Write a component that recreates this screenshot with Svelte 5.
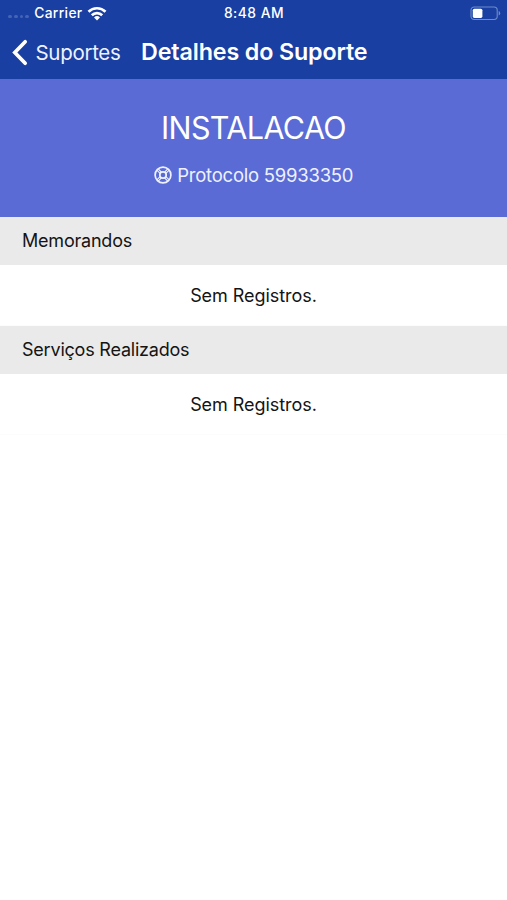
<script lang="ts">
  const title = "Detalhes do Suporte";
  const support = { type: "INSTALACAO", protocol: "59933350" };

  const sections: { name: string; items: string[] }[] = [
    { name: "Memorandos", items: [] },
    { name: "Serviços Realizados", items: [] },
  ];
</script>

<div class="screen">
  <header class="topbar">
    <div class="status">
      <div class="carrier">
        <span class="signal"><i></i><i></i><i></i><i></i></span>
        <span>Carrier</span>
        <svg class="wifi" width="20" height="15" viewBox="0 0 20 15" fill="none" stroke="#fff" stroke-width="2.7">
          <path d="M1.5 5.7a12.2 12.2 0 0 1 17 0" />
          <path d="M4.8 9.2a7.4 7.4 0 0 1 10.4 0" />
          <path d="M7 11.5a4.3 4.3 0 0 1 6 0L10 14.6Z" fill="#fff" stroke="none" />
        </svg>
      </div>
      <span class="time">8:48 AM</span>
      <svg class="battery" width="31" height="15" viewBox="0 0 31 15">
        <rect x="1" y="1" width="26.2" height="12.5" rx="3.2" fill="none" stroke="#6f8cca" stroke-width="1.1" />
        <rect x="2.8" y="2.7" width="9.6" height="9.2" rx="1.6" fill="#fff" />
        <path d="M28.7 5v4.6q1.5-.6 1.5-2.3T28.7 5Z" fill="#6f8cca" />
      </svg>
    </div>

    <nav class="nav">
      <button class="back">
        <svg width="17" height="27" viewBox="0 0 17 27" fill="none" stroke="#fff" stroke-width="3.7" stroke-linecap="round" stroke-linejoin="miter">
          <path d="M14.2 2.8 3.8 13.5 14.2 24.2" />
        </svg>
        <span>Suportes</span>
      </button>
      <h1>{title}</h1>
    </nav>
  </header>

  <section class="summary">
    <h2>{support.type}</h2>
    <p class="protocol">
      <!-- life buoy -->
      <svg width="18" height="18" viewBox="0 0 18 18" fill="none" stroke="#eef1ff" stroke-width="1.7">
        <circle cx="9" cy="9" r="7.9" />
        <circle cx="9" cy="9" r="3.2" />
        <path d="M3 4.3 6.2 7.4M4.3 3 7.4 6.2M15 4.3l-3.2 3.1M13.7 3l-3.1 3.2M3 13.7l3.2-3.1M4.3 15l3.1-3.2M15 13.7l-3.2-3.1M13.7 15l-3.1-3.2" stroke-width="1.1" />
      </svg>
      <span>Protocolo {support.protocol}</span>
    </p>
  </section>

  {#each sections as section}
    <section class="group">
      <h3>{section.name}</h3>
      {#each section.items as item}
        <p class="row">{item}</p>
      {:else}
        <p class="row">Sem Registros.</p>
      {/each}
    </section>
  {/each}
</div>

<style>
  :global(body) {
    margin: 0;
    background: #fff;
  }

  .screen {
    min-height: 900px;
    font-family: Inter, "Liberation Sans", sans-serif;
    color: #141414;
  }

  h1,
  h2,
  h3,
  p {
    margin: 0;
    font-weight: 400;
    white-space: nowrap;
  }

  .topbar {
    height: 79px;
    box-sizing: border-box;
    background: #183fa1;
    color: #fff;
  }

  .status {
    display: grid;
    grid-template-columns: 1fr auto 1fr;
    align-items: center;
    height: 26px;
    padding: 0 6px 0 8px;
    font-size: 13.8px;
    font-weight: 500;
  }

  .carrier {
    display: flex;
    align-items: center;
    letter-spacing: 0.35px;
  }

  .signal {
    display: flex;
    gap: 2px;
    margin: 7px 5px 0 0;
  }

  .signal i {
    width: 3.8px;
    height: 3.8px;
    border-radius: 50%;
    background: #4464b5;
  }

  .wifi {
    margin-left: 4px;
  }

  .time {
    margin-right: 1px;
    letter-spacing: 0.5px;
  }

  .battery {
    justify-self: end;
  }

  .nav {
    display: flex;
    align-items: center;
    height: 53px;
    padding-left: 11px;
  }

  .back {
    display: flex;
    align-items: center;
    gap: 7.5px;
    width: 130px;
    padding: 0;
    border: none;
    background: none;
    color: #eef2ff;
    font: inherit;
    font-size: 20.5px;
    letter-spacing: -0.3px;
    cursor: pointer;
  }

  h1 {
    font-size: 23.3px;
    font-weight: 600;
    line-height: 28px;
    letter-spacing: -0.15px;
    margin-top: -1px;
  }

  .summary {
    display: flex;
    flex-direction: column;
    align-items: center;
    height: 138px;
    box-sizing: border-box;
    padding-top: 29px;
    background: #5a6bd5;
    color: #fff;
  }

  h2 {
    font-size: 30.5px;
    line-height: 40px;
    font-weight: 400;
    letter-spacing: -0.6px;
  }

  .protocol {
    display: flex;
    align-items: center;
    gap: 5.5px;
    margin-top: 15px;
    font-size: 18.5px;
    line-height: 24px;
    letter-spacing: -0.24px;
    color: #eef1ff;
  }

  h3 {
    height: 48px;
    padding-left: 22px;
    background: #eaeaea;
    font-size: 18px;
    line-height: 48px;
    letter-spacing: -0.21px;
  }

  .row {
    height: 60px;
    border-bottom: 1px solid #fcfcfc;
    font-size: 18px;
    line-height: 62px;
    letter-spacing: -0.05px;
    text-align: center;
  }
</style>
